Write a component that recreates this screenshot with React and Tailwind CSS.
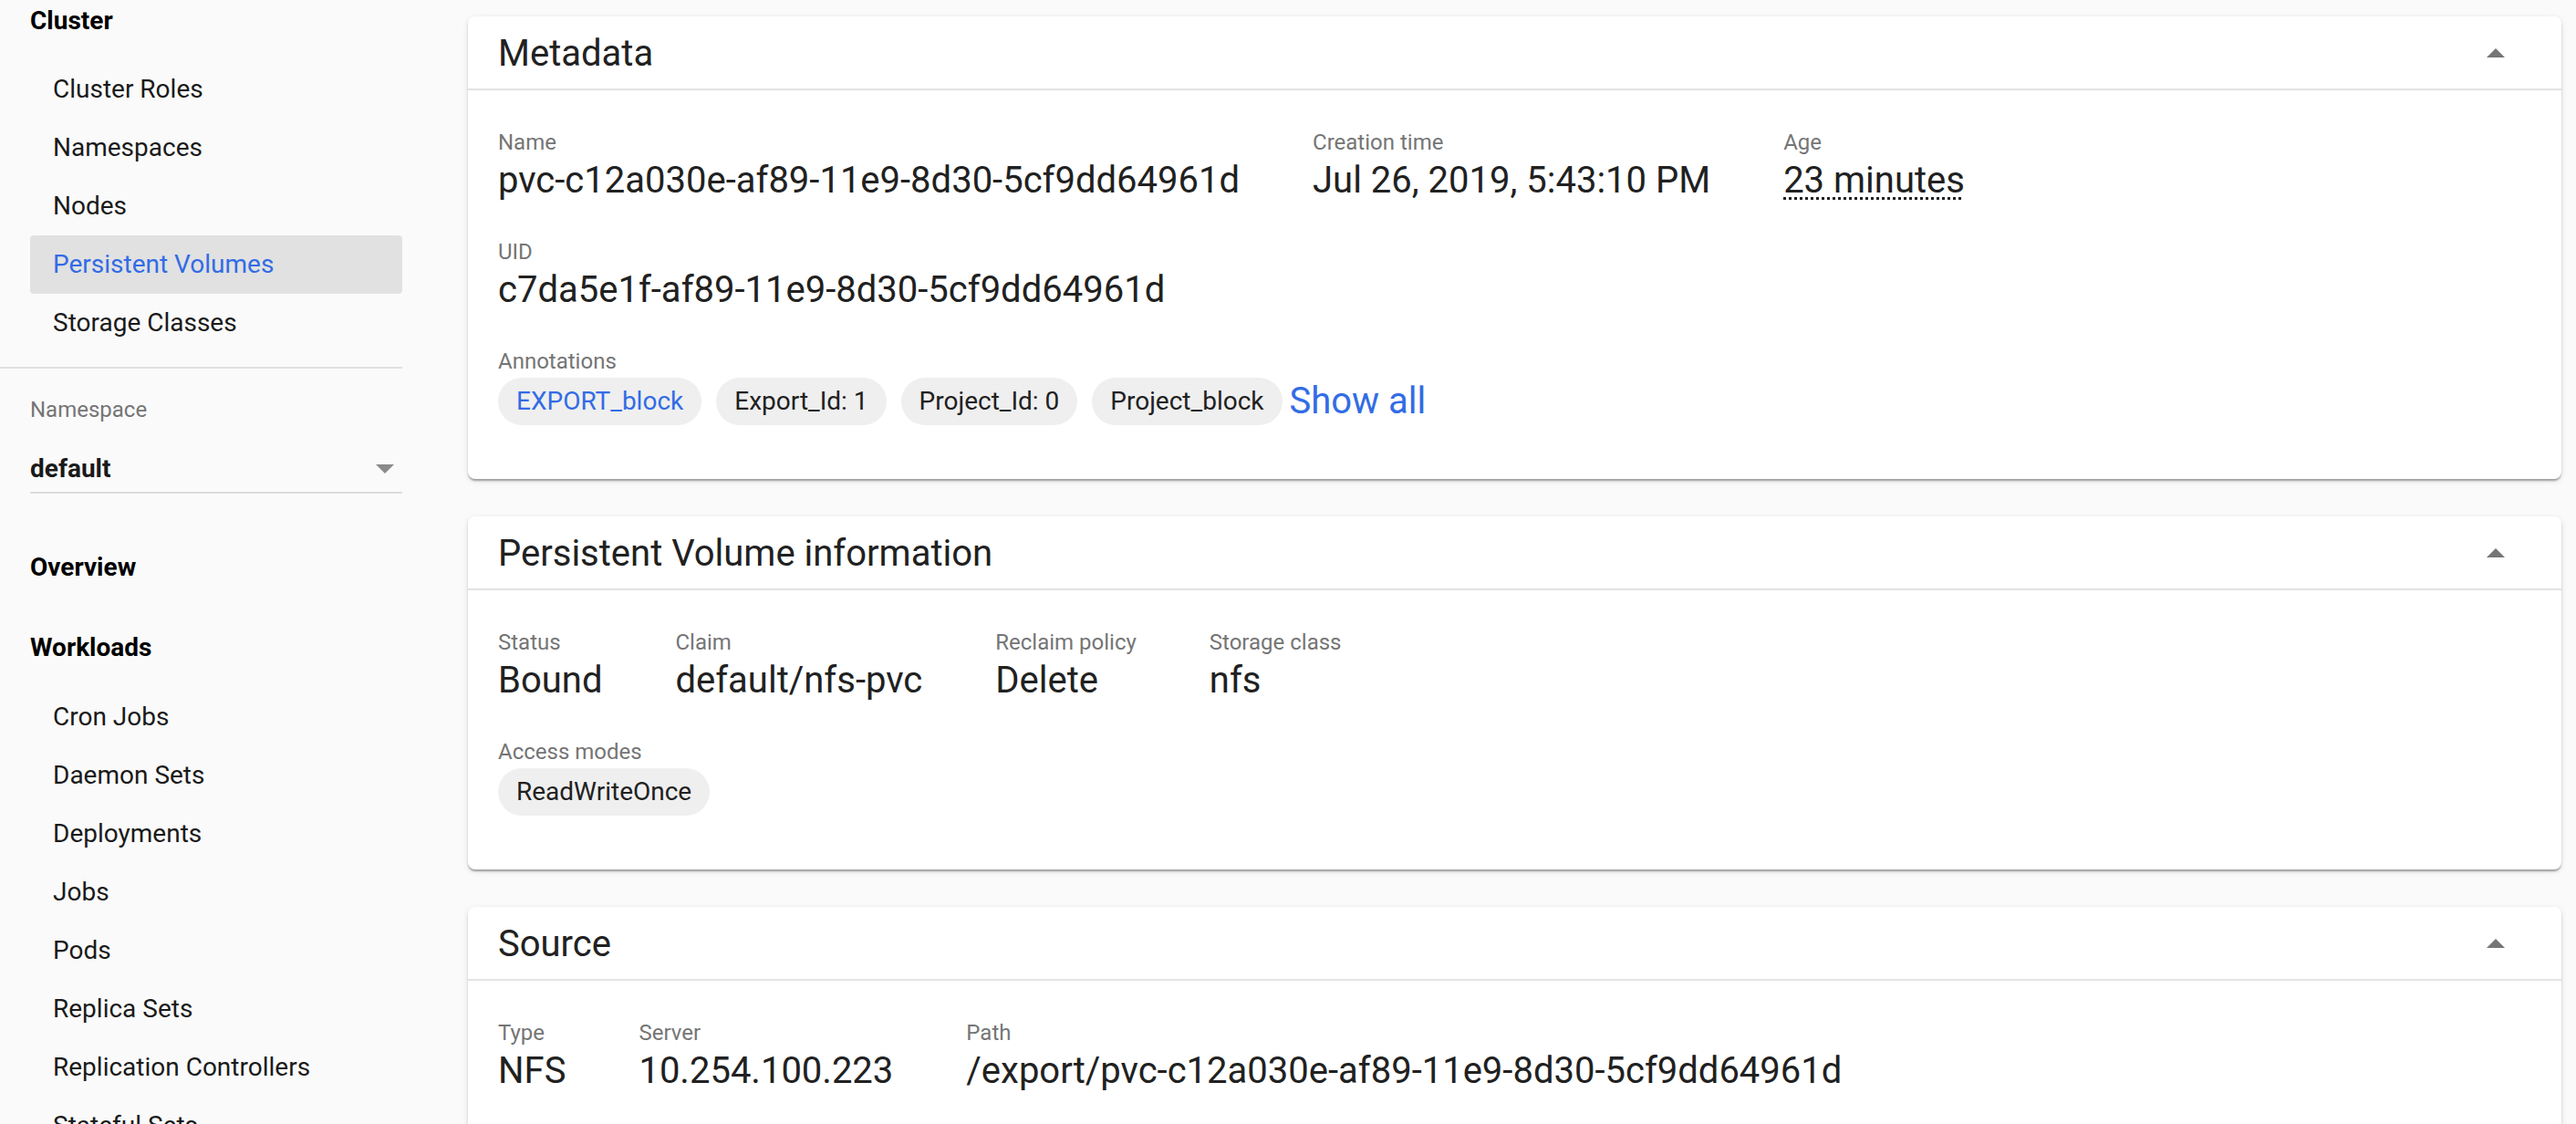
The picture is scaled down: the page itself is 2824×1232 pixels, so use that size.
import React from "react";

const clusterItems = ["Cluster Roles", "Namespaces", "Nodes", "Persistent Volumes", "Storage Classes"];
const workloadItems = [
  "Cron Jobs",
  "Daemon Sets",
  "Deployments",
  "Jobs",
  "Pods",
  "Replica Sets",
  "Replication Controllers",
  "Stateful Sets",
];

function NavItem({ label, active }) {
  return (
    <div
      className={
        "ml-[33px] flex h-[64px] w-[408px] items-center rounded-[4px] pl-[25px] text-[28px] " +
        (active ? "bg-[#e1e1e1] text-[#326ce5]" : "text-[#1a1a1a]")
      }
    >
      {label}
    </div>
  );
}

function Sidebar() {
  return (
    <aside className="w-[480px] shrink-0">
      <div className="flex h-[45px] items-center pl-[33px] text-[28px] font-bold text-black">Cluster</div>
      <div className="pt-[21px]">
        {clusterItems.map((item) => (
          <NavItem key={item} label={item} active={item === "Persistent Volumes"} />
        ))}
      </div>
      <div className="mt-[16px] h-[2px] w-[441px] bg-[#e0e0e0]" />

      <div className="mt-[29px] pl-[33px] text-[24px] leading-[32px] text-[#757575]">Namespace</div>
      <div className="ml-[33px] mt-[24px] flex h-[52px] w-[408px] items-center justify-between border-b-2 border-[#dcdcdc]">
        <span className="text-[28px] font-bold text-[#1a1a1a]">default</span>
        <svg width="20" height="10" viewBox="0 0 20 10" className="mr-[9px]">
          <path d="M0 0 L20 0 L10 10 Z" fill="#8a8a8a" />
        </svg>
      </div>

      <div className="mt-[49px] flex h-[64px] items-center pl-[33px] text-[28px] font-bold text-black">Overview</div>
      <div className="mt-[24px] flex h-[64px] items-center pl-[33px] text-[28px] font-bold text-black">Workloads</div>
      <div className="mt-[12px]">
        {workloadItems.map((item) => (
          <NavItem key={item} label={item} />
        ))}
      </div>
    </aside>
  );
}

function Card({ title, children }) {
  return (
    <section className="shrink-0 overflow-hidden rounded-[8px] bg-white shadow-[0_3px_2px_-1px_rgba(0,0,0,0.2),0_2px_2px_0_rgba(0,0,0,0.14),0_2px_6px_0_rgba(0,0,0,0.12)]">
      <div className="flex h-[81px] items-center justify-between border-b-2 border-[#e3e3e3] pl-[33px] pr-[62px]">
        <h2 className="pt-[2px] text-[40px] leading-[48px] text-[#212121]">{title}</h2>
        <svg width="20" height="10" viewBox="0 0 20 10">
          <path d="M0 10 L10 0 L20 10 Z" fill="#757575" />
        </svg>
      </div>
      <div className="px-[33px] pb-[59px] pt-[39px]">{children}</div>
    </section>
  );
}

function Prop({ label, children }) {
  return (
    <div>
      <div className="text-[24px] leading-[36px] text-[#757575]">{label}</div>
      <div className="whitespace-nowrap text-[40px] leading-[48px] text-[#212121]">{children}</div>
    </div>
  );
}

function Chip({ children, blue }) {
  return (
    <span
      className={
        "flex h-[52px] items-center rounded-full bg-[#efefef] px-[20px] text-[28px] " +
        (blue ? "text-[#326ce5]" : "text-[#212121]")
      }
    >
      {children}
    </span>
  );
}

export default function App() {
  return (
    <div className="flex h-[1232px] overflow-hidden bg-[#fafafa] font-['Roboto',sans-serif]">
      <Sidebar />

      <main className="flex flex-1 flex-col gap-[41px] pl-[33px] pr-[16px] pt-[18px]">
        <Card title="Metadata">
          <div className="flex flex-col gap-[36px]">
            <div className="flex gap-[80px]">
              <Prop label="Name">pvc-c12a030e-af89-11e9-8d30-5cf9dd64961d</Prop>
              <Prop label="Creation time">Jul 26, 2019, 5:43:10 PM</Prop>
              <Prop label="Age">
                <span className="underline decoration-dotted decoration-[3px] underline-offset-[5px]">23 minutes</span>
              </Prop>
            </div>
            <Prop label="UID">c7da5e1f-af89-11e9-8d30-5cf9dd64961d</Prop>
            <div>
              <div className="text-[24px] leading-[36px] text-[#757575]">Annotations</div>
              <div className="flex items-center">
                <div className="flex gap-[16px]">
                  <Chip blue>EXPORT_block</Chip>
                  <Chip>Export_Id: 1</Chip>
                  <Chip>Project_Id: 0</Chip>
                  <Chip>Project_block</Chip>
                </div>
                <span className="ml-[8px] text-[40px] leading-[48px] text-[#326ce5]">Show all</span>
              </div>
            </div>
          </div>
        </Card>

        <Card title="Persistent Volume information">
          <div className="flex flex-col gap-[36px]">
            <div className="flex gap-[80px]">
              <Prop label="Status">Bound</Prop>
              <Prop label="Claim">default/nfs-pvc</Prop>
              <Prop label="Reclaim policy">Delete</Prop>
              <Prop label="Storage class">nfs</Prop>
            </div>
            <div>
              <div className="text-[24px] leading-[36px] text-[#757575]">Access modes</div>
              <div className="flex">
                <Chip>ReadWriteOnce</Chip>
              </div>
            </div>
          </div>
        </Card>

        <Card title="Source">
          <div className="flex gap-[80px]">
            <Prop label="Type">NFS</Prop>
            <Prop label="Server">10.254.100.223</Prop>
            <Prop label="Path">/export/pvc-c12a030e-af89-11e9-8d30-5cf9dd64961d</Prop>
          </div>
        </Card>
      </main>
    </div>
  );
}
